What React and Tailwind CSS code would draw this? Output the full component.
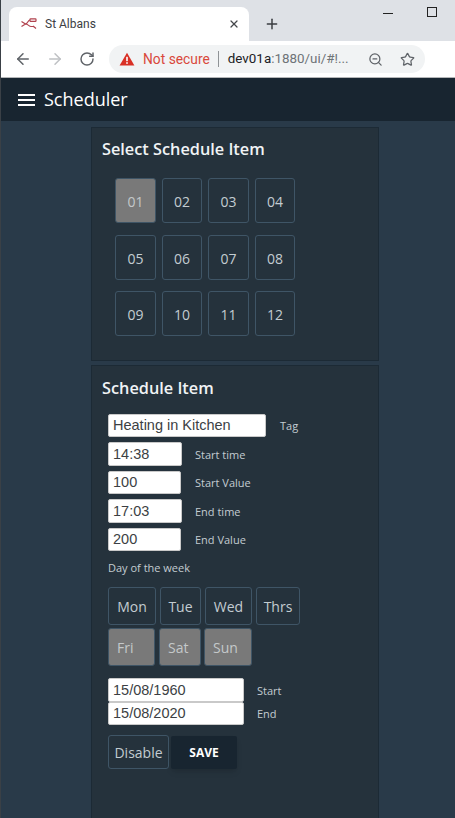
import { ArrowLeft, ArrowRight, RotateCw, Star, X, Plus, ZoomOut } from 'lucide-react';

const ITEMS = [
  [['01', 'w-[41px]', true], ['02', 'w-[40px]'], ['03', 'w-[41px]'], ['04', 'w-[40px]']],
  [['05', 'w-[41px]'], ['06', 'w-[40px]'], ['07', 'w-[41px]'], ['08', 'w-[40px]']],
  [['09', 'w-[41px]'], ['10', 'w-[40px]'], ['11', 'w-[41px]'], ['12', 'w-[40px]']],
];

const FIELDS = [
  { value: '14:38', label: 'Start time', width: 'w-[74px]', height: 'h-[24px] pt-[1px]', gap: 'ml-[13px]' },
  { value: '100', label: 'Start Value', width: 'w-[73px]', height: 'h-[23px]', gap: 'ml-[14px]' },
  { value: '17:03', label: 'End time', width: 'w-[74px]', height: 'h-[24px] pt-[1px]', gap: 'ml-[13px]' },
  { value: '200', label: 'End Value', width: 'w-[73px]', height: 'h-[23px]', gap: 'ml-[14px]' },
];

function ToggleButton({ label, className, active }) {
  return (
    <button
      className={`flex shrink-0 items-center rounded-[3px] border border-[#3f5566] text-[14px] ${className} ${
        active ? 'bg-[#797979] text-[#c4c8ca]' : 'text-[#c3ccd1]'
      }`}
    >
      {label}
    </button>
  );
}

function TextBox({ value, className }) {
  return (
    <div
      className={`flex items-center rounded-[2px] border border-[#c9c9c9] bg-white pl-[4px] font-['Liberation_Sans',sans-serif] text-[14.5px] text-[#3c3f44] ${className}`}
    >
      {value}
    </div>
  );
}

function Browser() {
  return (
    <div className="font-['Roboto',sans-serif]">
      <div className="flex h-[41px] bg-[#dee1e6] pt-[7px] pl-[8px]">
        <div className="flex h-[34px] w-[240px] items-center rounded-t-[8px] bg-white pl-[12px] pr-[9px]">
          <svg width="16" height="12" viewBox="0 0 16 12" fill="none" stroke="#b0424e" strokeWidth="1.2">
            <path d="M0.5 3.5 L4.5 6 L0.5 8.5" />
            <path d="M4.5 6 C6.5 6 7 2 9 2" />
            <rect x="9" y="0.8" width="6" height="2.6" rx="0.6" />
            <path d="M4.5 6 C7 6 8 8.5 10 8.5 H13" />
            <path d="M12 8 L15 10.5" />
          </svg>
          <span className="ml-[8px] flex-1 text-[12px] text-[#3c4043]">St Albans</span>
          <X size={12} strokeWidth={2.5} className="text-[#45484c]" />
        </div>
        <Plus size={16} strokeWidth={2.2} className="ml-[15px] mt-[9px] text-[#3a3d41]" />
        <div className="ml-[103px] mt-[6px] h-[1px] w-[10px] bg-[#222]" />
        <div className="ml-[34px] h-[10px] w-[10px] border border-[#222]" />
      </div>
      <div className="flex h-[36px] items-center bg-white">
        <ArrowLeft size={18} strokeWidth={2} className="ml-[13px] text-[#5f6368]" />
        <ArrowRight size={18} strokeWidth={2} className="ml-[14px] text-[#bfc1c4]" />
        <RotateCw size={16} strokeWidth={2.2} className="ml-[15px] text-[#5f6368]" />
        <div className="ml-[14px] flex h-[28px] w-[316px] items-center rounded-full bg-[#f1f3f4] pl-[10px]">
          <svg width="16" height="14" viewBox="0 0 16 14">
            <path d="M8 0.8 L15.4 13.4 H0.6 Z" fill="#d93025" />
            <rect x="7.2" y="4.8" width="1.6" height="4.4" fill="#fff" />
            <rect x="7.2" y="10.2" width="1.6" height="1.6" fill="#fff" />
          </svg>
          <span className="ml-[8px] text-[13.8px] text-[#d9483b]">Not secure</span>
          <div className="ml-[8px] h-[16px] w-[1px] bg-[#8f9396]" />
          <span className="ml-[9px] text-[13.4px] text-[#202124]">
            dev01a<span className="text-[#6f7478]">:1880/ui/#!...</span>
          </span>
          <ZoomOut size={15} strokeWidth={2} className="ml-[19px] text-[#5f6368]" />
          <Star size={15} strokeWidth={2} className="ml-[17px] text-[#5f6368]" />
        </div>
      </div>
      <div className="h-[1px] bg-[#b4b6b8]" />
    </div>
  );
}

export default function App() {
  return (
    <div className="flex h-[818px] w-[455px] flex-col overflow-hidden border-l border-[#3a4046] bg-[#293a49] font-['Open_Sans',sans-serif]">
      <Browser />

      <header className="flex h-[43px] shrink-0 items-center bg-[#182530] pl-[17px]">
        <div className="flex w-[17px] flex-col gap-[3px]">
          <span className="h-[2px] bg-white" />
          <span className="h-[2px] bg-white" />
          <span className="h-[2px] bg-white" />
        </div>
        <h1 className="ml-[9px] text-[18px] text-white">Scheduler</h1>
      </header>

      <main className="ml-[90px] mt-[6px] flex w-[288px] flex-col gap-[4px]">
        <section className="h-[234px] border border-[#1c2a35] bg-[#25323c] pl-[10px] pt-[10px]">
          <h2 className="text-[16.3px] leading-[22px] font-semibold text-[#f0f3f5]">Select Schedule Item</h2>
          <div className="ml-[13px] mt-[18px] flex flex-col">
            {ITEMS.map((row, i) => (
              <div key={i} className={`flex gap-[6px] ${i === 1 ? 'mt-[12px]' : i === 2 ? 'mt-[11px]' : ''}`}>
                {row.map(([label, width, active]) => (
                  <ToggleButton key={label} label={label} className={`${width} h-[45px] justify-center pt-[2px]`} active={active} />
                ))}
              </div>
            ))}
          </div>
        </section>

        <section className="h-[460px] border border-[#1c2a35] bg-[#25323c] pl-[10px] pt-[11px]">
          <h2 className="text-[16.3px] leading-[22px] font-semibold text-[#f0f3f5]">Schedule Item</h2>

          <div className="ml-[6px] mt-[15px] flex flex-col text-[11px] text-[#c3ccd1]">
            <div className="flex items-center">
              <TextBox value="Heating in Kitchen" className="h-[23px] w-[158px]" />
              <span className="ml-[14px] pt-[2px]">Tag</span>
            </div>
            {FIELDS.map((f) => (
              <div key={f.label} className="mt-[5px] flex items-center">
                <TextBox value={f.value} className={`${f.width} ${f.height}`} />
                <span className={`${f.gap} pt-[2px]`}>{f.label}</span>
              </div>
            ))}
            <p className="mt-[11px] leading-[12px]">Day of the week</p>

            <div className="mt-[13px] flex gap-[4px]">
              <ToggleButton label="Mon" className="h-[38px] w-[48px] justify-center" />
              <ToggleButton label="Tue" className="h-[38px] w-[41px] justify-center" />
              <ToggleButton label="Wed" className="h-[38px] w-[47px] justify-center" />
              <ToggleButton label="Thrs" className="h-[38px] w-[44px] justify-center" />
            </div>
            <div className="mt-[3px] flex">
              <ToggleButton label="Fri" className="h-[38px] w-[47px] pl-[8px]" active />
              <ToggleButton label="Sat" className="ml-[4px] h-[38px] w-[42px] pl-[8px]" active />
              <ToggleButton label="Sun" className="ml-[3px] h-[38px] w-[48px] pl-[8px]" active />
            </div>

            <div className="mt-[12px] flex items-center">
              <TextBox value="15/08/1960" className="h-[24px] w-[136px] pt-[1px] pl-[3px]" />
              <span className="ml-[13px] pt-[2px]">Start</span>
            </div>
            <div className="flex items-center">
              <TextBox value="15/08/2020" className="h-[23px] w-[136px] pt-[1px] pl-[3px]" />
              <span className="ml-[13px] pt-[2px]">End</span>
            </div>

            <div className="mt-[10px] flex items-center">
              <ToggleButton label="Disable" className="h-[34px] w-[61px] justify-center" />
              <button className="ml-[2px] h-[33px] w-[66px] rounded-[2px] bg-[#182530] pt-[2px] text-[12px] font-bold text-white shadow-md">
                SAVE
              </button>
            </div>
          </div>
        </section>
      </main>
    </div>
  );
}
